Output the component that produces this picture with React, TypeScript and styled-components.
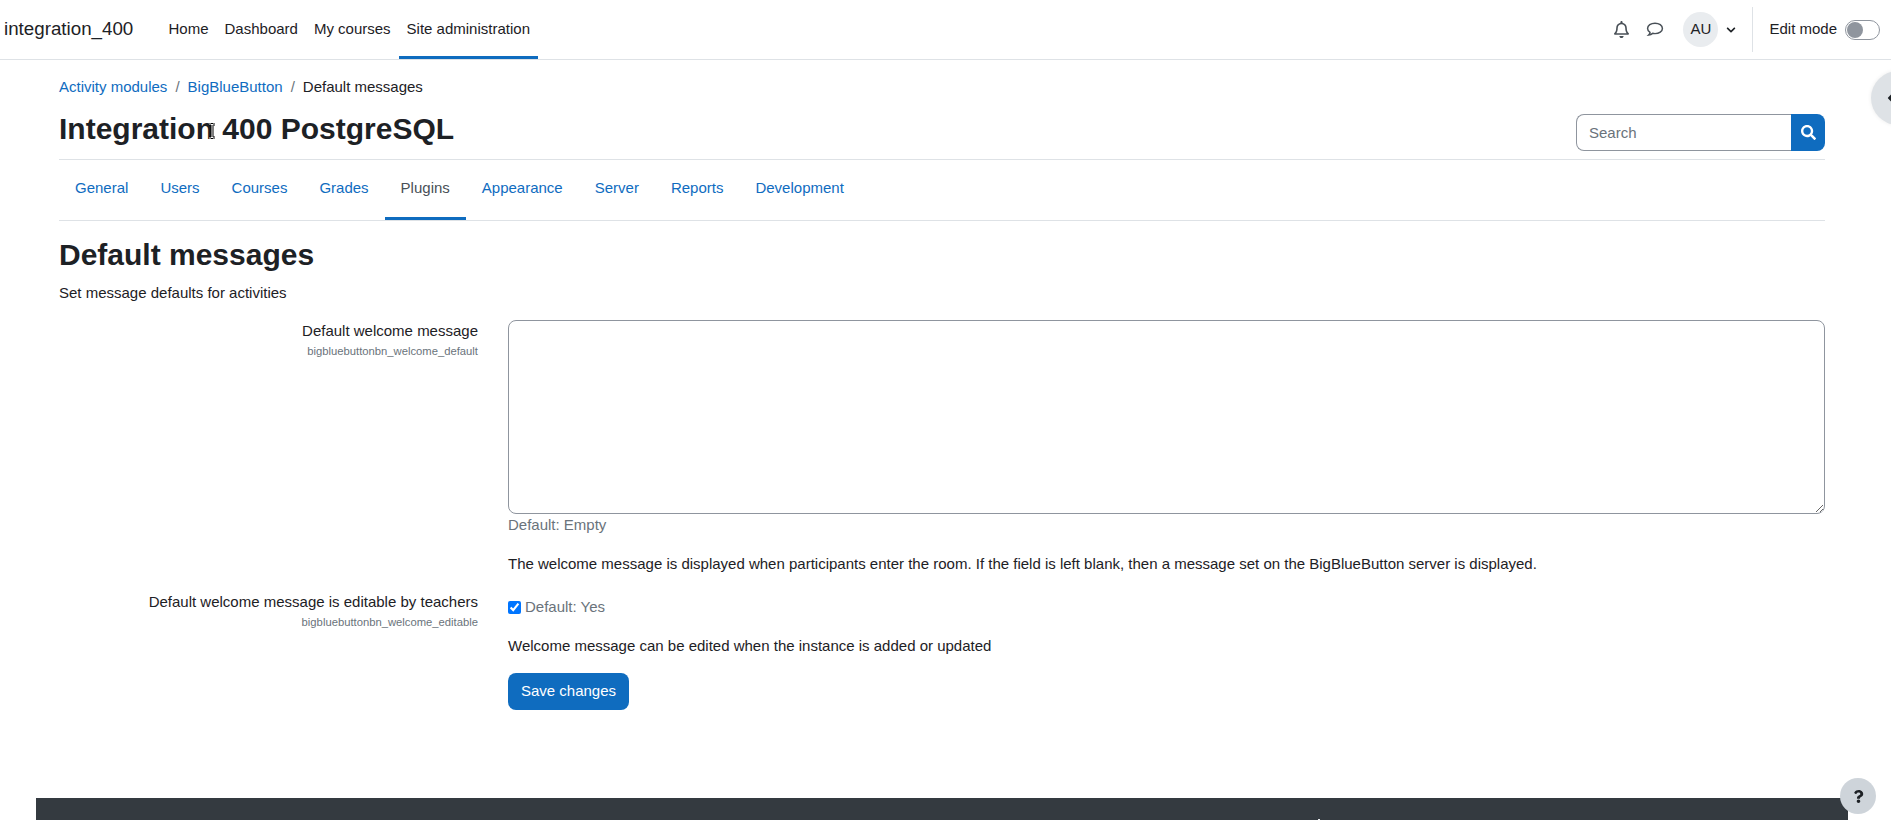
import { FaRegBell, FaChevronDown, FaSearch, FaQuestion, FaCaretLeft } from "react-icons/fa";
import styled, { createGlobalStyle } from "styled-components";

const GlobalStyle = createGlobalStyle`
  html, body {
    margin: 0;
    padding: 0;
    background: #fff;
    overflow: hidden;
  }
  body {
    font-family: "Liberation Sans", Arial, sans-serif;
    font-size: 15px;
    line-height: 22.5px;
    color: #1d2125;
  }
  * {
    box-sizing: border-box;
  }
`;

const Page = styled.div`
  position: relative;
  width: 1891px;
  height: 820px;
  overflow: hidden;
`;

const Navbar = styled.header`
  display: flex;
  align-items: stretch;
  height: 60px;
  border-bottom: 1px solid #dee2e6;
  padding-left: 4px;
`;

const Brand = styled.span`
  align-self: center;
  font-size: 18.75px;
  width: 113px;
  margin-right: 44px;
`;

const NavList = styled.nav`
  display: flex;
  gap: 1px;
`;

const NavItem = styled.span<{ $active?: boolean }>`
  display: flex;
  align-items: center;
  height: 59px;
  padding: 3px 7.5px 0;
  border-bottom: 3px solid ${(p) => (p.$active ? "#0f6cbf" : "transparent")};
`;

const Utilities = styled.div`
  margin-left: auto;
  display: flex;
  align-items: center;
  padding-right: 11px;
`;

const IconSlot = styled.span`
  display: flex;
  color: #495057;
  font-size: 17px;
  margin-right: 16px;
`;

const Avatar = styled.span`
  display: flex;
  align-items: center;
  justify-content: center;
  width: 35px;
  height: 35px;
  border-radius: 50%;
  background: #e9ecef;
  margin-left: 3px;
  margin-right: 8px;
`;

const Caret = styled(FaChevronDown)`
  font-size: 10px;
  color: #1d2125;
  margin-right: 16px;
`;

const Divider = styled.span`
  width: 1px;
  height: 45px;
  background: #dee2e6;
  margin-right: 16px;
`;

const EditLabel = styled.span`
  margin-right: 8px;
`;

const Switch = styled.span`
  display: flex;
  align-items: center;
  width: 35px;
  height: 20px;
  border: 1px solid #8f959e;
  border-radius: 10px;
  padding-left: 1px;
`;

const Knob = styled.span`
  width: 16px;
  height: 16px;
  border-radius: 50%;
  background: #8f959e;
`;

const Content = styled.main`
  width: 1766px;
  margin-left: 59px;
`;

const Breadcrumb = styled.nav`
  display: flex;
  align-items: center;
  height: 22px;
  margin-top: 16px;
`;

const Link = styled.span`
  color: #0f6cbf;
`;

const Sep = styled.span`
  color: #6a737b;
  padding: 0 8px;
`;

const HeaderRow = styled.div`
  display: flex;
  align-items: center;
  justify-content: space-between;
  height: 62px;
  padding-top: 2px;
  border-bottom: 1px solid #dee2e6;
`;

const Title = styled.h1`
  margin: 0 0 1px;
  font-size: 30px;
  line-height: 36px;
  font-weight: 700;
`;

const SearchBox = styled.div`
  display: flex;
  width: 249px;
  height: 37px;
  margin-top: 6px;
`;

const SearchInput = styled.div`
  flex: 1;
  display: flex;
  align-items: center;
  padding: 1px 0 0 12px;
  color: #6a737b;
  border: 1px solid #8f959e;
  border-right: 0;
  border-radius: 8px 0 0 8px;
`;

const SearchButton = styled.div`
  width: 34px;
  display: flex;
  align-items: center;
  justify-content: center;
  color: #fff;
  font-size: 15px;
  background: #0f6cbf;
  border-radius: 0 8px 8px 0;
`;

const Tabs = styled.nav`
  display: flex;
  height: 61px;
  border-bottom: 1px solid #dee2e6;
`;

const Tab = styled.span<{ $active?: boolean }>`
  display: flex;
  align-items: center;
  height: 60px;
  padding: 0 16px;
  color: ${(p) => (p.$active ? "#495057" : "#0f6cbf")};
  border-bottom: 3px solid ${(p) => (p.$active ? "#0f6cbf" : "transparent")};
`;

const Heading = styled.h2`
  margin: 16px 0 0;
  font-size: 30px;
  line-height: 36px;
  font-weight: 700;
`;

const Intro = styled.p`
  margin: 9px 0 0;
`;

const FormRow = styled.div`
  display: grid;
  grid-template-columns: 419px 1fr;
  column-gap: 30px;
  margin-top: 15px;
`;

const LabelCol = styled.div`
  text-align: right;
`;

const SettingName = styled.div``;

const SettingKey = styled.div`
  font-size: 11.25px;
  line-height: 16px;
  color: #6a737b;
  margin-top: 1px;
`;

const TextArea = styled.textarea`
  display: block;
  width: 100%;
  height: 194px;
  border: 1px solid #8f959e;
  border-radius: 8px;
  background: #fff;
  outline: none;
`;

const Muted = styled.div`
  color: #6a737b;
`;

const Description = styled.p<{ $top: number }>`
  margin: ${(p) => p.$top}px 0 0;
`;

const CheckLine = styled.label`
  display: flex;
  align-items: center;
  gap: 4px;
  color: #6a737b;
  height: 22px;
  margin-top: 6px;
`;

const Check = styled.input`
  width: 13px;
  height: 13px;
  margin: 0;
  accent-color: #0075ff;
`;

const SaveButton = styled.button`
  display: block;
  width: 121px;
  height: 37px;
  margin-top: 16px;
  border: 0;
  border-radius: 8px;
  background: #0f6cbf;
  color: #fff;
  font: inherit;
  padding: 0;
`;

const Footer = styled.footer`
  position: absolute;
  left: 36px;
  top: 798px;
  width: 1812px;
  height: 22px;
  background: #343a40;
`;

const FooterTick = styled.span`
  position: absolute;
  left: 1282px;
  bottom: 0;
  width: 1.5px;
  height: 1px;
  background: #e9ecef;
`;

const HelpButton = styled.span`
  position: absolute;
  left: 1840px;
  top: 778px;
  width: 36px;
  height: 36px;
  border-radius: 50%;
  background: #ced4da;
  display: flex;
  align-items: center;
  justify-content: center;
  font-size: 13px;
  color: #1d2125;
`;

const DrawerToggle = styled.span`
  position: absolute;
  left: 1871px;
  top: 71px;
  width: 54px;
  height: 54px;
  border-radius: 50%;
  background: #dee2e6;
  box-shadow: 0 0 4px rgba(0, 0, 0, 0.08);
  display: flex;
  align-items: center;
  padding-left: 9px;
  font-size: 22px;
  color: #1d2125;
`;

const TextCursor = styled.svg`
  position: absolute;
  left: 207px;
  top: 123px;
`;

const navItems = ["Home", "Dashboard", "My courses"];
const tabs = ["General", "Users", "Courses", "Grades", "Plugins", "Appearance", "Server", "Reports", "Development"];

const ChatIcon = () => (
  <svg width="18" height="17" viewBox="0 0 17 16" fill="none" stroke="currentColor" strokeWidth="1.4">
    <path d="M8.5 2C4.6 2 1.5 4.2 1.5 7c0 1.5.9 2.8 2.3 3.7-.1.9-.6 1.8-1.3 2.5 1.4-.2 2.8-.8 3.8-1.6.7.2 1.4.3 2.2.3 3.9 0 7-2.2 7-4.9S12.4 2 8.5 2z" />
  </svg>
);

const App = () => {
  return (
    <Page>
      <GlobalStyle />
      <Navbar>
        <Brand>integration_400</Brand>
        <NavList>
          {navItems.map((n) => (
            <NavItem key={n}>{n}</NavItem>
          ))}
          <NavItem $active>Site administration</NavItem>
        </NavList>
        <Utilities>
          <IconSlot><FaRegBell /></IconSlot>
          <IconSlot><ChatIcon /></IconSlot>
          <Avatar>AU</Avatar>
          <Caret />
          <Divider />
          <EditLabel>Edit mode</EditLabel>
          <Switch><Knob /></Switch>
        </Utilities>
      </Navbar>
      <Content>
        <Breadcrumb>
          <Link>Activity modules</Link>
          <Sep>/</Sep>
          <Link>BigBlueButton</Link>
          <Sep>/</Sep>
          <span>Default messages</span>
        </Breadcrumb>
        <HeaderRow>
          <Title>Integration 400 PostgreSQL</Title>
          <SearchBox>
            <SearchInput>Search</SearchInput>
            <SearchButton><FaSearch /></SearchButton>
          </SearchBox>
        </HeaderRow>
        <Tabs>
          {tabs.map((t) => (
            <Tab key={t} $active={t === "Plugins"}>{t}</Tab>
          ))}
        </Tabs>
        <Heading>Default messages</Heading>
        <Intro>Set message defaults for activities</Intro>
        <FormRow>
          <LabelCol>
            <SettingName>Default welcome message</SettingName>
            <SettingKey>bigbluebuttonbn_welcome_default</SettingKey>
          </LabelCol>
          <div>
            <TextArea />
            <Muted>Default: Empty</Muted>
            <Description $top={17}>
              The welcome message is displayed when participants enter the room. If the field is left blank, then a message set on the BigBlueButton server is displayed.
            </Description>
          </div>
        </FormRow>
        <FormRow>
          <LabelCol>
            <SettingName>Default welcome message is editable by teachers</SettingName>
            <SettingKey>bigbluebuttonbn_welcome_editable</SettingKey>
          </LabelCol>
          <div>
            <CheckLine>
              <Check type="checkbox" defaultChecked />
              Default: Yes
            </CheckLine>
            <Description $top={16}>Welcome message can be edited when the instance is added or updated</Description>
            <SaveButton>Save changes</SaveButton>
          </div>
        </FormRow>
      </Content>
      <Footer><FooterTick /></Footer>
      <HelpButton><FaQuestion /></HelpButton>
      <DrawerToggle><FaCaretLeft /></DrawerToggle>
      <TextCursor width="10" height="16" viewBox="0 0 10 16">
        <path d="M2 1h2l1 1 1-1h2M5 2v12M2 15h2l1-1 1 1h2" fill="none" stroke="#000" strokeWidth="3" />
        <path d="M2 1h2l1 1 1-1h2M5 2v12M2 15h2l1-1 1 1h2" fill="none" stroke="#fff" strokeWidth="1" />
      </TextCursor>
    </Page>
  );
};

export default App;
